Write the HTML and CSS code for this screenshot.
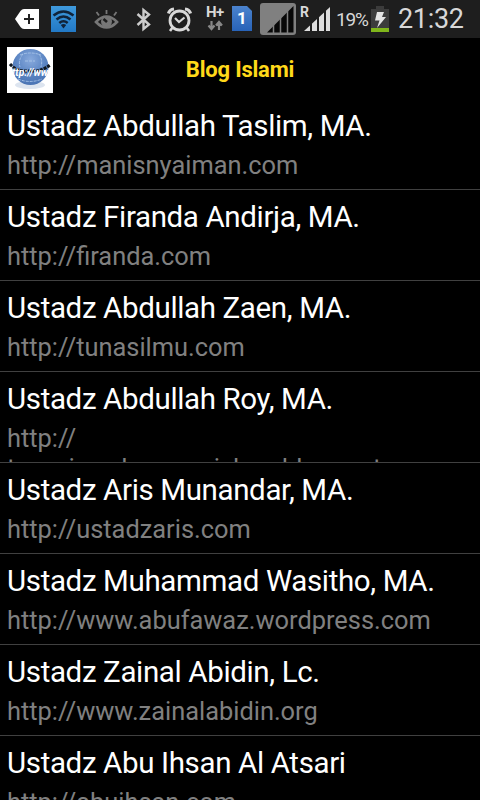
FILE: index.html
```html
<!DOCTYPE html>
<html lang="id">
<head>
    <meta charset="UTF-8">
    <meta name="viewport" content="width=device-width, initial-scale=1.0">
    <title>Blog Islami</title>
    <link rel="stylesheet" href="styles.css">
</head>
<body>
    <div class="statusbar">
        <svg class="icons" width="480" height="38" viewBox="0 0 480 38">
            <!-- back / add -->
            <path d="M15 19 L20.5 11 Q22 9 24 9 H39 V29 H24 Q22 29 20.5 27 Z" fill="#fff"/>
            <path d="M29 14 V24 M24 19 H34" stroke="#222" stroke-width="2"/>
            <!-- wifi -->
            <defs>
                <linearGradient id="blue" x1="0" y1="0" x2="0" y2="1">
                    <stop offset="0" stop-color="#3f9add"/>
                    <stop offset="1" stop-color="#2279c6"/>
                </linearGradient>
                <linearGradient id="sim" x1="0" y1="0" x2="0" y2="1">
                    <stop offset="0" stop-color="#4b83cd"/>
                    <stop offset="1" stop-color="#2863b8"/>
                </linearGradient>
            </defs>
            <rect x="51" y="6" width="25" height="26" fill="url(#blue)"/>
            <g fill="none" stroke="#10233a" stroke-width="2.5">
                <path d="M53.5 15.5 Q63.5 7.5 73.5 15.5"/>
                <path d="M56.5 19.5 Q63.5 13.5 70.5 19.5"/>
                <path d="M59.3 23 Q63.5 19.5 67.7 23"/>
            </g>
            <path d="M60.8 25 Q63.5 23 66.2 25 L63.5 28.5 Z" fill="#10233a"/>
            <!-- eye -->
            <g fill="none" stroke="#777" stroke-width="1.8">
                <path d="M96 22 Q106.5 11 117 22 Q106.5 33 96 22 Z" stroke-width="2.6"/>
                <path d="M96.5 12 L99 15.5 M106.5 10 V14 M116.5 12 L114 15.5"/>
            </g>
            <circle cx="106.5" cy="21.5" r="5.5" fill="#777"/>
            <path d="M103.5 19 L107 22" stroke="#1e1e1e" stroke-width="2.6"/>
            <!-- bluetooth -->
            <path d="M137.5 14 L149 24.5 L143.5 29 V10 L149 14.5 L137.5 25" fill="none" stroke="#ccc" stroke-width="2.4"/>
            <!-- alarm -->
            <g fill="none" stroke="#d8d8d8">
                <circle cx="179.5" cy="20.5" r="9.5" stroke-width="2.8"/>
                <path d="M175 18 L179 22 L184.5 17.5" stroke-width="2.2"/>
                <path d="M168.5 13.5 Q169.5 9.5 174 9 M190.5 13.5 Q189.5 9.5 185 9" stroke-width="3.2"/>
                <path d="M172.5 27.5 L170 31 M186.5 27.5 L189 31" stroke-width="2.6"/>
            </g>
            <!-- data -->
            <path d="M211.5 21 V28 M208.5 25.5 L211.5 29 L214.5 25.5 M219 30 V23 M216 25.5 L219 22 L222 25.5" fill="none" stroke="#888" stroke-width="2.2"/>
            <!-- sim card -->
            <path d="M232 6 H247 L252 11 V31 H232 Z" fill="url(#sim)"/>
            <!-- signal -->
            <rect x="260" y="3" width="36" height="32" rx="3" fill="#808080"/>
            <path d="M267 32.5 L293.5 6 V32.5 Z" fill="#080808"/>
            <path d="M273.5 8 V33 M280.5 8 V33 M287.5 5 V33" stroke="#808080" stroke-width="1.5"/>
            <!-- roaming signal -->
            <path d="M304 31 L330 7 V31 Z" fill="#ddd"/>
            <path d="M311 6 V32 M318 6 V32 M325 6 V32" stroke="#1e1e1e" stroke-width="2"/>
            <!-- battery -->
            <path d="M371 9 H376 V6 H384 V9 H389 V28 H371 Z" fill="#3c3c3c"/>
            <rect x="371" y="28" width="18" height="4" fill="#80b61b"/>
            <path d="M377 12 H384 L382 17 H386 L377 28 L379.5 20.5 H375 Z" fill="#e4e4e4"/>
        </svg>
        <span class="label network">H+</span>
        <span class="label sim">1</span>
        <span class="label roaming">R</span>
        <span class="label percent">19%</span>
        <span class="label clock">21:32</span>
    </div>
    <div class="header">
        <svg class="logo" width="46" height="46" viewBox="0 0 46 46">
            <defs>
                <radialGradient id="globe" cx="0.5" cy="0.3" r="0.7">
                    <stop offset="0" stop-color="#88aadd"/>
                    <stop offset="0.6" stop-color="#5a84c2"/>
                    <stop offset="1" stop-color="#4a74b4"/>
                </radialGradient>
            </defs>
            <rect width="46" height="46" fill="#fff"/>
            <ellipse cx="23" cy="38" rx="15" ry="4" fill="#dce4ef"/>
            <circle cx="23.5" cy="20" r="18" fill="url(#globe)"/>
            <g fill="none" stroke="#aecaec" stroke-width="0.8" stroke-dasharray="3 1">
                <path d="M13 8 Q23 4 34 8 M18 14 H28"/>
                <path d="M16 7 Q11 13 13 20 M32 7 Q36 13 34 20"/>
                <path d="M11 32 Q23 37 35 32"/>
            </g>
            <!-- address band round the globe -->
            <path d="M3 17 Q8 23 16 24 H30 Q38 22 43 18" fill="none" stroke="#101820" stroke-width="3" stroke-dasharray="3 1"/>
            <text class="logo-text" x="5" y="29" textLength="36" lengthAdjust="spacingAndGlyphs">ttp://ww</text>
        </svg>
        <h1>Blog Islami</h1>
    </div>
    <ul class="list">
        <li>
            <div class="name">Ustadz Abdullah Taslim, MA.</div>
            <div class="url">http://manisnyaiman.com</div>
        </li>
        <li>
            <div class="name">Ustadz Firanda Andirja, MA.</div>
            <div class="url">http://firanda.com</div>
        </li>
        <li>
            <div class="name">Ustadz Abdullah Zaen, MA.</div>
            <div class="url">http://tunasilmu.com</div>
        </li>
        <li>
            <div class="name">Ustadz Abdullah Roy, MA.</div>
            <div class="url">http://<br>tanyajawabagamaislam.blogspot.com</div>
        </li>
        <li>
            <div class="name">Ustadz Aris Munandar, MA.</div>
            <div class="url">http://ustadzaris.com</div>
        </li>
        <li>
            <div class="name">Ustadz Muhammad Wasitho, MA.</div>
            <div class="url">http://www.abufawaz.wordpress.com</div>
        </li>
        <li>
            <div class="name">Ustadz Zainal Abidin, Lc.</div>
            <div class="url">http://www.zainalabidin.org</div>
        </li>
        <li>
            <div class="name">Ustadz Abu Ihsan Al Atsari</div>
            <div class="url">http://abuihsan.com</div>
        </li>
    </ul>
</body>
</html>
```
FILE: styles.css
```css
body {
    margin: 0;
    height: 800px;
    overflow: hidden;
    background-color: #000;
    color: #fff;
    font-family: Roboto, sans-serif;
}
.statusbar {
    position: relative;
    height: 38px;
    background-color: #1e1e1e;
}
.icons {
    display: block;
}
/* text over the status icons */
.label {
    position: absolute;
    color: #d8d8d8;
    line-height: 1;
}
.network {
    left: 206px;
    top: 5px;
    font-size: 15px;
    font-weight: bold;
    letter-spacing: -0.5px;
}
.sim {
    left: 237px;
    top: 10px;
    font-size: 17px;
    font-weight: bold;
    color: #fff;
}
.roaming {
    left: 300px;
    top: 5px;
    font-size: 14px;
    font-weight: bold;
}
.percent {
    left: 336px;
    top: 10px;
    font-size: 19px;
    letter-spacing: -1.2px;
}
.clock {
    left: 398px;
    top: 6px;
    font-size: 27px;
    letter-spacing: -0.3px;
}
.header {
    display: grid;
    grid-template-columns: 46px 1fr 46px;
    align-items: center;
    height: 61px;
    padding: 2px 7px 0;
    box-sizing: border-box;
}
.logo-text {
    font-size: 11px;
    font-weight: bold;
    font-style: italic;
    fill: #fff;
}
h1 {
    margin: 0;
    text-align: center;
    font-size: 22px;
    font-weight: bold;
    letter-spacing: -0.2px;
    color: #ffd91a;
}
.list {
    margin: 0;
    padding: 0;
    list-style: none;
}
.list li {
    height: 91px;
    padding: 7px 7px 0;
    box-sizing: border-box;
    border-bottom: 1px solid #404040;
    overflow: hidden;
    white-space: nowrap;
}
.name {
    font-size: 29.5px;
    line-height: 40px;
    letter-spacing: -0.36px;
}
.url {
    font-size: 25.4px;
    line-height: 30px;
    padding-top: 4px;
    color: #808080;
}
```
